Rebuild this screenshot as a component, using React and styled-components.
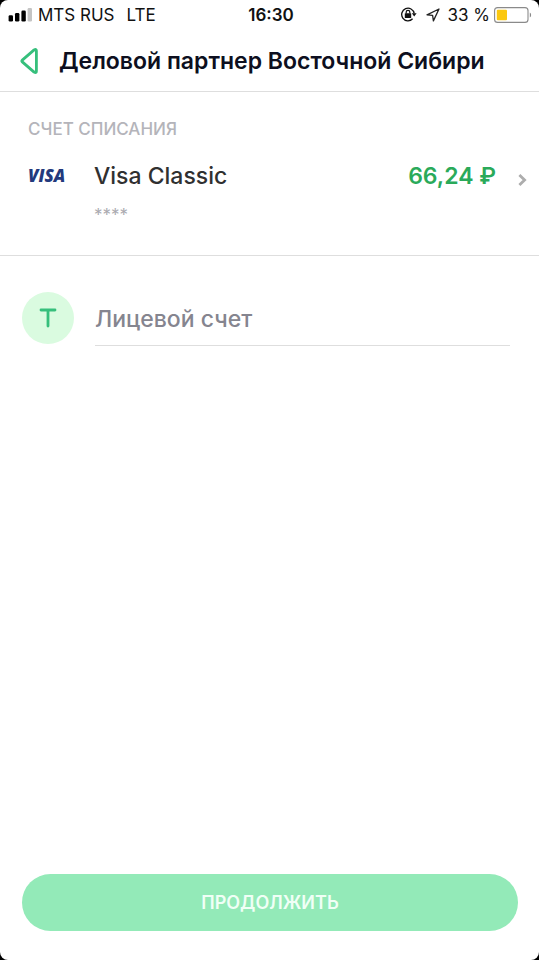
import styled, { createGlobalStyle } from "styled-components";

const GlobalStyle = createGlobalStyle`
  * {
    box-sizing: border-box;
  }
  body {
    margin: 0;
    background: #000;
    font-family: Inter, "Liberation Sans", sans-serif;
  }
  button,
  input {
    font-family: inherit;
  }
`;

const SignalIcon = () => (
  <svg width="24" height="14" viewBox="0 0 24 14" aria-hidden="true">
    <rect x="0.6" y="7.2" width="4.4" height="6.3" rx="1.3" fill="#000" />
    <rect x="7" y="5" width="4.4" height="8.5" rx="1.3" fill="#000" />
    <rect x="13.4" y="2.6" width="4.4" height="10.9" rx="1.3" fill="#000" />
    <rect x="19.6" y="0" width="4.4" height="13.5" rx="1.3" fill="#c4c4c4" />
  </svg>
);

const RotationLockIcon = () => (
  <svg width="18" height="16" viewBox="0 0 18 16" fill="none" aria-hidden="true">
    <path
      d="M12.6 11.8A6.3 6.3 0 1 1 14.2 6.4"
      stroke="#111"
      strokeWidth="1.3"
    />
    <path d="M11.8 6.2h4.8l-2.4 3.4z" fill="#111" />
    <rect x="4.8" y="6.2" width="6.4" height="4.8" rx="0.6" fill="#111" />
    <path d="M6.2 6.6V5.1a1.8 1.8 0 0 1 3.6 0v1.5" stroke="#111" strokeWidth="1.2" />
  </svg>
);

const LocationIcon = () => (
  <svg width="14" height="14" viewBox="0 0 14 14" fill="none" aria-hidden="true">
    <path
      d="M13 1 1 6.8l5.6.5.8 5.6z"
      stroke="#222"
      strokeWidth="1.3"
      strokeLinejoin="round"
    />
  </svg>
);

const BatteryIcon = () => (
  <svg width="38" height="16" viewBox="0 0 38 16" aria-hidden="true">
    <rect
      x="0.6"
      y="0.6"
      width="33.4"
      height="14.8"
      rx="3"
      fill="#fff"
      stroke="#8a8a8a"
      strokeWidth="1.1"
    />
    <rect x="2.8" y="2.8" width="10.2" height="10.4" rx="1" fill="#fbc80f" />
    <path d="M35.8 5.5c1.8.9 1.8 4.1 0 5z" fill="#8a8a8a" />
  </svg>
);

const BackIcon = () => (
  <svg width="18" height="26" viewBox="0 0 18 26" fill="none" aria-hidden="true">
    <path
      d="M14.1 1.9 2.3 12.1q-1 .9 0 1.8l11.8 10.2q2.3 1.2 2.3-.9V2.8q0-2.1-2.3-.9z"
      stroke="#36bf7c"
      strokeWidth="2.8"
      strokeLinejoin="round"
    />
  </svg>
);

const ChevronIcon = () => (
  <svg width="9" height="12" viewBox="0 0 9 12" fill="none" aria-hidden="true">
    <path d="m1.4 1 5.2 5-5.2 5" stroke="#adadad" strokeWidth="2.8" />
  </svg>
);

const LetterIcon = () => (
  <svg width="18" height="20" viewBox="0 0 18 20" fill="none" aria-hidden="true">
    <path
      d="M2 2h14M9 2v16"
      stroke="#36bf7c"
      strokeWidth="2.8"
      strokeLinecap="round"
    />
  </svg>
);

const App = () => {
  return (
    <>
      <GlobalStyle />
      <Screen>
        <StatusBar>
          <StatusGroup>
            <SignalIcon />
            <StatusText>MTS RUS</StatusText>
            <Network>LTE</Network>
          </StatusGroup>
          <Clock>16:30</Clock>
          <StatusGroup $end>
            <RotationLockIcon />
            <LocationIcon />
            <StatusText>33 %</StatusText>
            <BatteryIcon />
          </StatusGroup>
        </StatusBar>

        <Header>
          <BackButton type="button" aria-label="Назад">
            <BackIcon />
          </BackButton>
          <Title>Деловой партнер Восточной Сибири</Title>
        </Header>

        <Account>
          <AccountLabel>СЧЕТ СПИСАНИЯ</AccountLabel>
          <AccountButton type="button">
            <VisaMark>VISA</VisaMark>
            <CardName>Visa Classic</CardName>
            <Balance>66,24 ₽</Balance>
            <ChevronIcon />
          </AccountButton>
          <CardNumber>****</CardNumber>
        </Account>

        <Form>
          <Field>
            <FieldBadge>
              <LetterIcon />
            </FieldBadge>
            <FieldInput
              type="text"
              aria-label="Лицевой счет"
              placeholder="Лицевой счет"
            />
          </Field>
          <SubmitButton type="button">ПРОДОЛЖИТЬ</SubmitButton>
        </Form>
      </Screen>
    </>
  );
};

export default App;

const Screen = styled.main`
  display: flex;
  flex-direction: column;
  min-height: 100vh;
  overflow: hidden;
  background: #fff;
  border-radius: 8px;
`;

const StatusBar = styled.div`
  display: grid;
  grid-template-columns: 1fr auto 1fr;
  align-items: center;
  height: 30px;
  padding: 0 8px;
  color: #111;
  white-space: nowrap;
`;

const StatusGroup = styled.div`
  display: flex;
  align-items: center;
  justify-content: ${({ $end }) => ($end ? "flex-end" : "flex-start")};
  gap: ${({ $end }) => ($end ? "8px" : "6px")};
  margin-right: ${({ $end }) => ($end ? "-1px" : "0")};

  span + svg {
    margin-left: -4px;
  }
`;

const StatusText = styled.span`
  font-size: 17px;
  line-height: 20px;
`;

const Network = styled(StatusText)`
  margin-left: 6px;
`;

const Clock = styled.time`
  padding-left: 3px;
  font-size: 17px;
  font-weight: 600;
  line-height: 20px;
`;

const Header = styled.header`
  display: flex;
  align-items: center;
  gap: 21px;
  height: 62px;
  padding: 0 20px;
  border-bottom: 1px solid #dedede;
`;

const BackButton = styled.button`
  display: flex;
  padding: 0;
  border: none;
  background: none;
`;

const Title = styled.h1`
  margin: 0;
  color: #0d0f20;
  font-size: 23px;
  font-weight: 600;
  line-height: 32px;
  white-space: nowrap;
`;

const Account = styled.section`
  height: 164px;
  padding: 27px 12px 0 28px;
  border-bottom: 1px solid #dedede;
`;

const AccountLabel = styled.h2`
  margin: 0;
  color: #b4b4ba;
  font-size: 17px;
  font-weight: 500;
  line-height: 20px;
`;

const AccountButton = styled.button`
  display: flex;
  align-items: center;
  width: 100%;
  margin-top: 19px;
  padding: 0;
  border: none;
  background: none;
  font-size: 23px;
  line-height: 36px;
  text-align: left;

  svg {
    margin-top: 8px;
  }
`;

const VisaMark = styled.span`
  width: 66px;
  color: #23397c;
  font-family: "Open Sans", sans-serif;
  font-size: 17px;
  font-style: italic;
  font-weight: 800;
`;

const CardName = styled.span`
  flex: 1;
  color: #303030;
  font-weight: 500;
`;

const Balance = styled.span`
  margin-right: 22px;
  color: #2aaa5a;
  font-weight: 600;
`;

const CardNumber = styled.p`
  margin: 11px 0 0 66px;
  color: #aaaab0;
  font-size: 17px;
  line-height: 20px;
`;

const Form = styled.form`
  display: flex;
  flex: 1;
  flex-direction: column;
  justify-content: space-between;
  padding: 36px 21px 29px 22px;
`;

const Field = styled.div`
  display: flex;
  align-items: flex-start;
  gap: 21px;
  padding-right: 8px;
`;

const FieldBadge = styled.span`
  display: flex;
  flex: none;
  align-items: center;
  justify-content: center;
  width: 52px;
  height: 52px;
  border-radius: 50%;
  background: #dafbe0;
`;

const FieldInput = styled.input`
  flex: 1;
  min-width: 0;
  height: 54px;
  padding: 0;
  border: none;
  border-bottom: 1px solid #dedede;
  outline: none;
  background: none;
  color: #303030;
  font-size: 23px;
  font-weight: 500;

  &::placeholder {
    color: #85858f;
    opacity: 1;
  }
`;

const SubmitButton = styled.button`
  height: 57px;
  border: none;
  border-radius: 29px;
  background: #93eab8;
  color: #f0fff6;
  font-size: 18px;
  font-weight: 600;
`;
